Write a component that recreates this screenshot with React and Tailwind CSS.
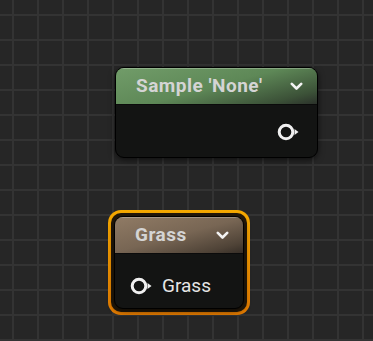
import React from "react";

const Chevron = () => (
  <svg width="13" height="9" viewBox="0 0 13 9" fill="none">
    <path d="M1.8 1.8 L6.5 6.5 L11.2 1.8" stroke="#f2f2f2" strokeWidth="2.6" strokeLinecap="round" strokeLinejoin="round" />
  </svg>
);

// value pin: ring with a small arrow on its right
const Pin = () => (
  <svg width="22" height="18" viewBox="0 0 22 18" fill="none">
    <circle cx="9" cy="9" r="6.8" stroke="#f0f0f0" strokeWidth="3" />
    <path d="M17.5 6 L21.5 9 L17.5 12 Z" fill="#f0f0f0" />
  </svg>
);

const Node = ({ title, header, children, className }) => (
  <div className={`absolute rounded-[9px] border border-black bg-[#131413] shadow-[0_2px_6px_rgba(0,0,0,0.6)] overflow-hidden ${className}`}>
    <div className={`flex items-center h-[37px] pl-[20px] pr-[14px] border-b border-[#0b0b0b] shadow-[inset_0_1px_0_rgba(255,255,255,0.25)] ${header}`}>
      <span className="flex-1 text-[19px] font-bold text-[#d4d4d4] tracking-[0.5px]">{title}</span>
      <Chevron />
    </div>
    {children}
  </div>
);

export default function App() {
  return (
    <div
      className="relative w-[373px] h-[341px] overflow-hidden bg-[#262626] bg-[linear-gradient(to_right,#333333_2px,transparent_2px),linear-gradient(to_bottom,#333333_2px,transparent_2px)] bg-size-[25px_25px] bg-position-[12px_14px]"
      style={{ fontFamily: "Roboto, 'Noto Sans', sans-serif" }}
    >
      <Node
        title="Sample 'None'"
        className="left-[115px] top-[67px] w-[203px] h-[91px]"
        header="bg-[linear-gradient(165deg,#719c69_0%,#5e8857_50%,#3c5238_85%,#2b312a_100%)]"
      >
        <div className="flex justify-end pr-[18px] pt-[18px]">
          <Pin />
        </div>
      </Node>

      {/* selection outline */}
      <div className="absolute left-[108px] top-[210px] w-[142px] h-[105px] rounded-[13px] p-[3px] bg-[linear-gradient(to_bottom,#f6aa00,#e27a00)]">
        <div className="w-full h-full rounded-[10px] bg-[#24190a]" />
      </div>
      <Node
        title="Grass"
        className="left-[114px] top-[216px] w-[130px] h-[93px]"
        header="bg-[linear-gradient(165deg,#907b65_0%,#786654_50%,#4f4337_85%,#362e27_100%)]"
      >
        <div className="flex items-center gap-[10px] pl-[15px] pt-[18px]">
          <Pin />
          <span className="text-[19px] text-[#e6e6e6]">Grass</span>
        </div>
      </Node>
    </div>
  );
}
